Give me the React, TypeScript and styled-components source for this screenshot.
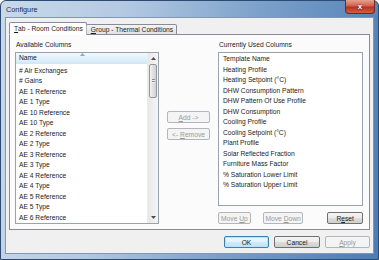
import styled, { createGlobalStyle, css } from "styled-components";

const GlobalStyle = createGlobalStyle`
  html, body {
    margin: 0;
    padding: 0;
    overflow: hidden;
    background: #ffffff;
  }
  body {
    font-family: "Liberation Sans", Arial, sans-serif;
    font-size: 6.7px;
    color: #1b1b1b;
  }
`;

const AVAILABLE = [
  "# Air Exchanges",
  "# Gains",
  "AE 1 Reference",
  "AE 1 Type",
  "AE 10 Reference",
  "AE 10 Type",
  "AE 2 Reference",
  "AE 2 Type",
  "AE 3 Reference",
  "AE 3 Type",
  "AE 4 Reference",
  "AE 4 Type",
  "AE 5 Reference",
  "AE 5 Type",
  "AE 6 Reference",
];

const USED = [
  "Template Name",
  "Heating Profile",
  "Heating Setpoint (°C)",
  "DHW Consumption Pattern",
  "DHW Pattern Of Use Profile",
  "DHW Consumption",
  "Cooling Profile",
  "Cooling Setpoint (°C)",
  "Plant Profile",
  "Solar Reflected Fraction",
  "Furniture Mass Factor",
  "% Saturation Lower Limit",
  "% Saturation Upper Limit",
];

const Window = styled.div`
  width: 379px;
  height: 260px;
  box-sizing: border-box;
  display: flex;
  flex-direction: column;
  border: 1px solid #2b4b73;
  border-radius: 6px 6px 0 0;
  background: linear-gradient(
    100deg,
    #c9d9ea 0%,
    #b3c9e2 30%,
    #7ba0ca 62%,
    #4a7bb3 100%
  );
`;

const TitleBar = styled.div`
  height: 16px;
  display: flex;
  align-items: flex-start;
  justify-content: space-between;
`;

const Title = styled.span`
  margin: 4px 0 0 5px;
  font-size: 7.3px;
  color: #1e2a38;
`;

const CloseButton = styled.div`
  width: 30px;
  height: 14px;
  margin: -1px 3px 0 0;
  box-sizing: border-box;
  border: 1px solid #6b2a2a;
  border-top: none;
  border-radius: 0 0 4px 4px;
  background: linear-gradient(#e8a08f 0%, #d2604c 45%, #b8321f 55%, #d06040 100%);
  display: flex;
  align-items: center;
  justify-content: center;
  color: #ffffff;
  font-size: 8px;
  font-weight: bold;
  text-shadow: 0 0 2px #4a1010;
`;

const Client = styled.div`
  flex: 1;
  margin: 0 4px 5px 4px;
  border: 1px solid #8197b3;
  background: #f0f0f0;
  display: flex;
  flex-direction: column;
  padding: 4px 3px 0 3px;
`;

const TabStrip = styled.div`
  display: flex;
  align-items: flex-end;
  height: 13px;
  position: relative;
  z-index: 1;
  margin-bottom: -1px;
`;

const Tab = styled.div<{ $active?: boolean }>`
  box-sizing: border-box;
  border: 1px solid #898c95;
  border-radius: 2px 2px 0 0;
  padding: 0 3px 0 4px;
  display: flex;
  align-items: center;
  white-space: nowrap;
  ${({ $active }) =>
    $active
      ? css`
          height: 13px;
          background: #ffffff;
          border-bottom-color: #ffffff;
        `
      : css`
          height: 11px;
          margin-left: -1px;
          border-left-color: #b5b8be;
          background: linear-gradient(#f3f3f3, #e3e3e3);
        `}
`;

const Mn = styled.span`
  text-decoration: underline;
  text-underline-offset: 1px;
`;

const Panel = styled.div`
  height: 196px;
  box-sizing: border-box;
  border: 1px solid #898c95;
  background: #fbfbfb;
  display: flex;
  padding: 4px 6px 5px 5px;
`;

const Column = styled.div<{ $w: number }>`
  width: ${({ $w }) => $w}px;
  display: flex;
  flex-direction: column;
`;

const Label = styled.div`
  height: 12px;
  padding: 2px 0 0 1px;
  box-sizing: border-box;
  margin-bottom: 1px;
`;

const ListBox = styled.div<{ $h: number }>`
  height: ${({ $h }) => $h}px;
  box-sizing: border-box;
  border: 1px solid #9aa3ad;
  background: #ffffff;
  overflow: hidden;
`;

const ListView = styled(ListBox)`
  display: flex;
`;

const ListMain = styled.div`
  flex: 1;
  display: flex;
  flex-direction: column;
`;

const Header = styled.div`
  height: 12px;
  position: relative;
  box-sizing: border-box;
  border-bottom: 1px solid #d5e6f3;
  background: linear-gradient(#f2f9fe 0%, #e2f1fb 50%, #d4eaf8 100%);
  padding-left: 3px;
  display: flex;
  align-items: center;
`;

const SortArrow = styled.svg`
  position: absolute;
  top: 0;
  left: 64px;
`;

const Rows = styled.div<{ $top: number }>`
  padding-top: ${({ $top }) => $top}px;
`;

const Row = styled.div<{ $indent: number }>`
  height: 10.5px;
  line-height: 10.5px;
  padding-left: ${({ $indent }) => $indent}px;
  white-space: nowrap;
`;

const ScrollBar = styled.div`
  width: 10px;
  display: flex;
  flex-direction: column;
  background: linear-gradient(90deg, #e8e8e8, #f5f5f5);
  border-left: 1px solid #ececec;
`;

const ScrollArrow = styled.div`
  height: 11px;
  display: flex;
  align-items: center;
  justify-content: center;
`;

const Thumb = styled.div`
  height: 34px;
  margin: 0 1px;
  box-sizing: border-box;
  border: 1px solid #979797;
  border-radius: 2px;
  background: linear-gradient(90deg, #f3f3f3, #e0e0e0 50%, #d2d2d2);
  display: flex;
  align-items: center;
  justify-content: center;
`;

const Grip = styled.div`
  width: 3px;
  height: 4px;
  background: repeating-linear-gradient(#8c8c8c 0 1px, #f0f0f0 1px 2px);
`;

const Track = styled.div`
  flex: 1;
`;

const Middle = styled.div`
  flex: 1;
  display: flex;
  flex-direction: column;
  align-items: center;
  padding-top: 72px;
  gap: 5px;
`;

const Button = styled.div<{ $w: number; $disabled?: boolean; $default?: boolean }>`
  width: ${({ $w }) => $w}px;
  height: 12px;
  box-sizing: border-box;
  border-radius: 2px;
  display: flex;
  align-items: center;
  justify-content: center;
  white-space: pre;
  border: 1px solid #707070;
  background: linear-gradient(#f4f4f4 0%, #ebebeb 48%, #dddddd 52%, #cfcfcf 100%);
  color: #1b1b1b;
  ${({ $disabled }) =>
    $disabled &&
    css`
      border-color: #b2b6ba;
      background: #f4f4f4;
      color: #9a9a9a;
    `}
  ${({ $default }) =>
    $default &&
    css`
      border-color: #3c7fb1;
      box-shadow: inset 0 0 0 1px #b9e3f8;
      background: linear-gradient(#eef7fd 0%, #e1f2fc 48%, #cdebfb 52%, #bfe3f7 100%);
    `}
`;

const RightButtons = styled.div`
  display: flex;
  margin-top: 6px;
  gap: 12px;
`;

const Spacer = styled.div`
  flex: 1;
`;

const Footer = styled.div`
  display: flex;
  justify-content: flex-end;
  gap: 5px;
  padding: 6px 0 0 0;
`;

const Arrow = ({ up }: { up: boolean }) => (
  <svg width="5" height="3" viewBox="0 0 5 3">
    <path d={up ? "M0 3 L2.5 0 L5 3 Z" : "M0 0 L2.5 3 L5 0 Z"} fill="#4d4d4d" />
  </svg>
);

const App = () => {
  return (
    <>
      <GlobalStyle />
      <Window>
        <TitleBar>
          <Title>Configure</Title>
          <CloseButton>x</CloseButton>
        </TitleBar>
        <Client>
          <TabStrip>
            <Tab $active>
              <Mn>T</Mn>ab - Room Conditions
            </Tab>
            <Tab>
              <Mn>G</Mn>roup - Thermal Conditions
            </Tab>
          </TabStrip>
          <Panel>
            <Column $w={144}>
              <Label>Available Columns</Label>
              <ListView $h={172}>
                <ListMain>
                  <Header>
                    Name
                    <SortArrow width="5" height="3" viewBox="0 0 5 3">
                      <path d="M0 3 L2.5 0 L5 3 Z" fill="#97a7b5" />
                    </SortArrow>
                  </Header>
                  <Rows $top={2}>
                    {AVAILABLE.map((name) => (
                      <Row key={name} $indent={3}>
                        {name}
                      </Row>
                    ))}
                  </Rows>
                </ListMain>
                <ScrollBar>
                  <ScrollArrow>
                    <Arrow up />
                  </ScrollArrow>
                  <Thumb>
                    <Grip />
                  </Thumb>
                  <Track />
                  <ScrollArrow>
                    <Arrow up={false} />
                  </ScrollArrow>
                </ScrollBar>
              </ListView>
            </Column>
            <Middle>
              <Button $w={43} $disabled>
                <Mn>A</Mn>dd -&gt;
              </Button>
              <Button $w={43} $disabled>
                &lt;- <Mn>R</Mn>emove
              </Button>
            </Middle>
            <Column $w={145}>
              <Label>Currently Used Columns</Label>
              <ListBox $h={154}>
                <Rows $top={1}>
                  {USED.map((name) => (
                    <Row key={name} $indent={4}>
                      {name}
                    </Row>
                  ))}
                </Rows>
              </ListBox>
              <RightButtons>
                <Button $w={35} $disabled>
                  {"Move "}
                  <Mn>U</Mn>p
                </Button>
                <Button $w={43} $disabled>
                  {"Move "}
                  <Mn>D</Mn>own
                </Button>
                <Spacer />
                <Button $w={38}>
                  R<Mn>e</Mn>set
                </Button>
              </RightButtons>
            </Column>
          </Panel>
          <Footer>
            <Button $w={45} $default>
              OK
            </Button>
            <Button $w={46}>Cancel</Button>
            <Button $w={45} $disabled>
              <Mn>A</Mn>pply
            </Button>
          </Footer>
        </Client>
      </Window>
    </>
  );
};

export default App;
